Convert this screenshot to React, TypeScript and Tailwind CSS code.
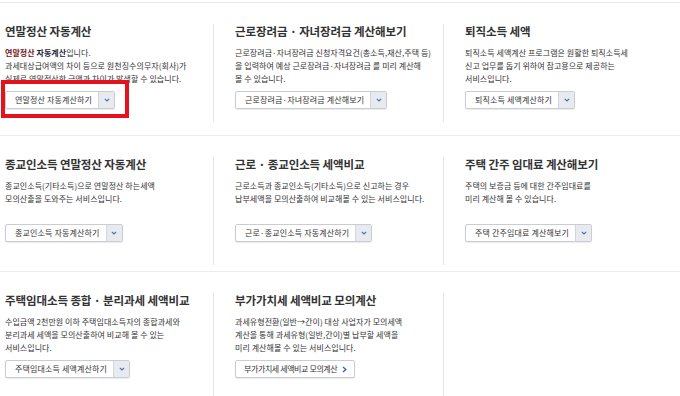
import React from "react";

type Item = {
  title: string;
  lines: React.ReactNode[];
  button: string;
  arrow?: boolean;
};

function Btn({ label, arrow }: { label: string; arrow?: boolean }) {
  return (
    <div className="mt-[6px] inline-flex h-[18px] items-stretch self-start rounded-[2px] border border-[#c9cdd3] bg-white shadow-[0_1px_1px_rgba(0,0,0,0.08)]">
      <span
        className={
          arrow
            ? "flex items-center whitespace-nowrap pl-[8px] pr-[5px] text-[8px] tracking-[-0.4px] text-[#333]"
            : "flex items-center whitespace-nowrap pl-[9px] pr-[6px] text-[8px] tracking-[0.15px] text-[#333]"
        }
      >
        {label}
      </span>
      {arrow ? (
        <span className="flex items-center pr-[7px]">
          <svg width="5" height="7" viewBox="0 0 5 7">
            <polyline points="1,1 3.8,3.5 1,6" fill="none" stroke="#2f5fb0" strokeWidth="1.3" />
          </svg>
        </span>
      ) : (
        <span className="flex w-[16px] items-center justify-center border-l border-[#d3d7dd] bg-[#e7eaee]">
          <svg width="6" height="4" viewBox="0 0 6 4">
            <polyline points="0.8,0.8 3,3 5.2,0.8" fill="none" stroke="#4b6fa8" strokeWidth="1.1" />
          </svg>
        </span>
      )}
    </div>
  );
}

function Col({ item, first, h }: { item: Item; first?: boolean; h: string }) {
  return (
    <div
      className={
        first
          ? `flex w-[213px] flex-col pl-[5px] ${h}`
          : `flex w-[230px] flex-col border-l border-[#e4e4e4] pl-[21px] ${h}`
      }
    >
      <h3 className="h-[14px] whitespace-nowrap text-[11.5px] font-bold leading-[14px] tracking-[-0.1px] text-[#333]">
        {item.title}
      </h3>
      <div className="mt-[8px] h-[39px] whitespace-nowrap text-[8px] leading-[13px] tracking-[0.05px] text-[#333]">
        {item.lines.map((l, i) => (
          <div key={i}>{l}</div>
        ))}
      </div>
      <Btn label={item.button} arrow={item.arrow} />
    </div>
  );
}

const rows: Item[][] = [
  [
    {
      title: "연말정산 자동계산",
      lines: [
        <>
          <b className="font-bold">
            <span className="text-[#7a1420]">연말정산</span>{" "}
            <span className="text-[#1c2440]">자동계산</span>
          </b>
          입니다.
        </>,
        "과세대상급여액의 차이 등으로 원천징수의무자(회사)가",
        "실제로 연말정산한 금액과 차이가 발생할 수 있습니다.",
      ],
      button: "연말정산 자동계산하기",
    },
    {
      title: "근로장려금 · 자녀장려금 계산해보기",
      lines: [
        "근로장려금·자녀장려금 신청자격요건(총소득,재산,주택 등)",
        "을 입력하여 예상 근로장려금·자녀장려금 를 미리 계산해",
        "볼 수 있습니다.",
      ],
      button: "근로장려금·자녀장려금 계산해보기",
    },
    {
      title: "퇴직소득 세액",
      lines: [
        "퇴직소득 세액계산 프로그램은 원활한 퇴직소득세",
        "신고 업무를 돕기 위하여 참고용으로 제공하는",
        "서비스입니다.",
      ],
      button: "퇴직소득 세액계산하기",
    },
  ],
  [
    {
      title: "종교인소득 연말정산 자동계산",
      lines: ["종교인소득(기타소득)으로 연말정산 하는세액", "모의산출을 도와주는 서비스입니다."],
      button: "종교인소득 자동계산하기",
    },
    {
      title: "근로 · 종교인소득 세액비교",
      lines: [
        "근로소득과 종교인소득(기타소득)으로 신고하는 경우",
        "납부세액을 모의산출하여 비교해볼 수 있는 서비스입니다.",
      ],
      button: "근로·종교인소득 자동계산하기",
    },
    {
      title: "주택 간주 임대료 계산해보기",
      lines: ["주택의 보증금 등에 대한 간주임대료를", "미리 계산해 볼 수 있습니다."],
      button: "주택 간주임대료 계산해보기",
    },
  ],
  [
    {
      title: "주택임대소득 종합 · 분리과세 세액비교",
      lines: [
        "수입금액 2천만원 이하 주택임대소득자의 종합과세와",
        "분리과세 세액을 모의산출하여 비교해 볼 수 있는",
        "서비스입니다.",
      ],
      button: "주택임대소득 세액계산하기",
    },
    {
      title: "부가가치세 세액비교 모의계산",
      lines: [
        "과세유형전환(일반→간이) 대상 사업자가 모의세액",
        "계산을 통해 과세유형(일반,간이)별 납부할 세액을",
        "미리 계산해볼 수 있는 서비스입니다.",
      ],
      button: "부가가치세 세액비교 모의계산",
      arrow: true,
    },
  ],
];

export default function App() {
  return (
    <div
      className="relative h-[396px] w-[680px] overflow-hidden bg-white pt-[2px]"
      style={{ fontFamily: '"Noto Sans CJK KR", "Noto Sans", sans-serif' }}
    >
      <div className="flex h-[133px] items-start border-t border-[#ececec] pt-[21px]">
        <Col item={rows[0][0]} first h="h-[98px]" />
        <Col item={rows[0][1]} h="h-[98px]" />
        <Col item={rows[0][2]} h="h-[98px]" />
      </div>
      <div className="flex h-[136px] items-start border-t border-[#ececec] pt-[21px]">
        <Col item={rows[1][0]} first h="h-[108px]" />
        <Col item={rows[1][1]} h="h-[108px]" />
        <Col item={rows[1][2]} h="h-[108px]" />
      </div>
      <div className="flex h-[130px] items-start border-t border-[#ececec] pt-[21px]">
        <Col item={rows[2][0]} first h="h-[110px]" />
        <Col item={rows[2][1]} h="h-[110px]" />
        <div className="h-[110px] w-[230px] border-l border-[#e4e4e4]" />
      </div>
      <div className="absolute left-[1px] top-[80px] h-[38px] w-[128px] border-[4px] border-[#e3121c]" />
    </div>
  );
}
